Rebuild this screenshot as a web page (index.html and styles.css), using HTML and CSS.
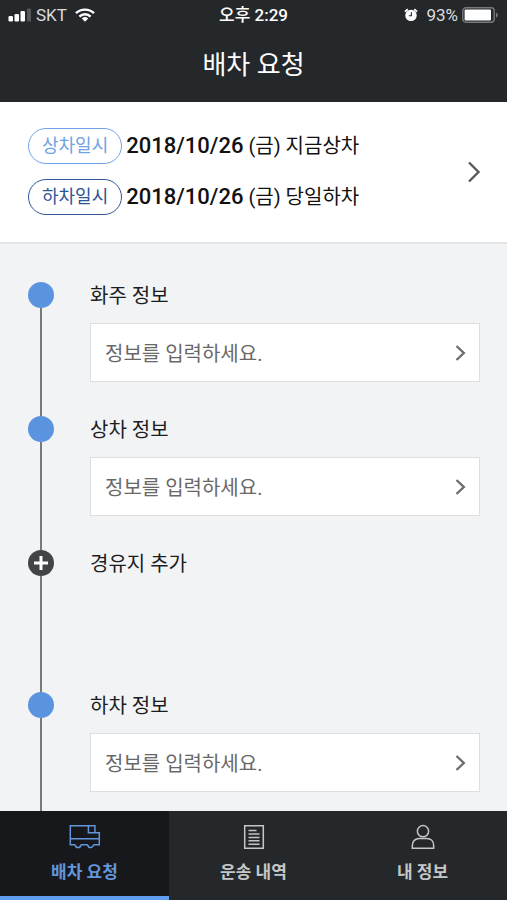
FILE: index.html
```html
<!DOCTYPE html>
<html lang="ko">
<head>
<meta charset="utf-8">
<meta name="viewport" content="width=device-width, initial-scale=1">
<title>배차 요청</title>
<link rel="stylesheet" href="styles.css">
</head>
<body>
<header class="header">
  <div class="status">
    <div class="status-side">
      <svg class="signal" width="24" height="14" viewBox="0 0 24 14" aria-hidden="true">
        <rect x="0.500" y="8" width="4.500" height="5.500" rx="1.200"/>
        <rect x="6.500" y="6" width="4.500" height="7.500" rx="1.200"/>
        <rect x="12.500" y="3" width="4.500" height="10.500" rx="1.200"/>
        <rect class="dim" x="19" y="0.500" width="4" height="13" rx="1.200"/>
      </svg>
      <span class="carrier">SKT</span>
      <svg width="20" height="14" viewBox="0 0 20 14" aria-hidden="true">
        <g fill="none" stroke="#fff" stroke-width="2.4">
          <path d="M1 5.2a13 13 0 0 1 18 0"/>
          <path d="M4.4 8.6a8 8 0 0 1 11.2 0"/>
        </g>
        <path fill="#fff" d="M6.8 10.5a4.8 4.8 0 0 1 6.4 0L10 13.8z"/>
      </svg>
    </div>
    <span class="clock">오후 2:29</span>
    <div class="status-side status-end">
      <svg width="14" height="14" viewBox="0 0 14 14" aria-hidden="true">
        <circle cx="7" cy="7.4" r="5.700" fill="#fff"/>
        <path d="M.9 3.600 3.800 1.200M13.100 3.600l-2.900-2.400" stroke="#fff" stroke-width="1.800" fill="none"/>
        <path d="M7.4 4.2v3.6H4.8" stroke="#25282b" stroke-width="1.100" fill="none"/>
      </svg>
      <span class="percent">93%</span>
      <svg width="37" height="16" viewBox="0 0 37 16" aria-hidden="true">
        <rect x=".8" y=".8" width="31.4" height="14.4" rx="3" fill="none" stroke="#77797b" stroke-width="1.4"/>
        <rect x="2.6" y="2.6" width="26.4" height="10.8" rx="1" fill="#fff"/>
        <path d="M34 5.4c2.400 .8 2.400 4.400 0 5.200z" fill="#77797b"/>
      </svg>
    </div>
  </div>
  <h1 class="title">배차 요청</h1>
</header>

<button class="schedule" type="button">
  <span class="schedule-rows">
    <span class="schedule-row"><span class="chip">상차일시</span><span class="when"><span class="date">2018/10/26</span> (금) 지금상차</span></span>
    <span class="schedule-row"><span class="chip chip-dark">하차일시</span><span class="when"><span class="date">2018/10/26</span> (금) 당일하차</span></span>
  </span>
  <svg width="14" height="22" viewBox="0 0 14 22" fill="none" stroke="#58595a" stroke-width="2.4" aria-hidden="true"><path d="M2 1.500 11.500 11 2 20.500"/></svg>
</button>

<main class="content">
  <ol class="steps">
    <li class="step">
      <span class="rail"><span class="dot"></span></span>
      <div class="step-body">
        <h2 class="label" id="shipper">화주 정보</h2>
        <button class="field" type="button" aria-describedby="shipper">정보를 입력하세요.
          <svg width="11" height="18" viewBox="0 0 11 18" fill="none" stroke="#6c6d6e" stroke-width="2.400" aria-hidden="true"><path d="M1.500 2 8.800 9l-7.300 7"/></svg>
        </button>
      </div>
    </li>
    <li class="step">
      <span class="rail"><span class="dot"></span></span>
      <div class="step-body">
        <h2 class="label" id="loading">상차 정보</h2>
        <button class="field" type="button" aria-describedby="loading">정보를 입력하세요.
          <svg width="11" height="18" viewBox="0 0 11 18" fill="none" stroke="#6c6d6e" stroke-width="2.400" aria-hidden="true"><path d="M1.500 2 8.800 9l-7.300 7"/></svg>
        </button>
      </div>
    </li>
    <li class="step step-add">
      <span class="rail">
        <svg width="26" height="26" viewBox="0 0 26 26" aria-hidden="true"><circle cx="13" cy="13" r="13" fill="#414547"/><path d="M13 6v14M6 13h14" stroke="#fff" stroke-width="3"/></svg>
      </span>
      <div class="step-body">
        <button class="label add" type="button">경유지 추가</button>
      </div>
    </li>
    <li class="step">
      <span class="rail"><span class="dot"></span></span>
      <div class="step-body">
        <h2 class="label" id="unloading">하차 정보</h2>
        <button class="field" type="button" aria-describedby="unloading">정보를 입력하세요.
          <svg width="11" height="18" viewBox="0 0 11 18" fill="none" stroke="#6c6d6e" stroke-width="2.400" aria-hidden="true"><path d="M1.500 2 8.800 9l-7.300 7"/></svg>
        </button>
      </div>
    </li>
  </ol>
</main>

<nav class="tabs">
  <a class="tab tab-active" href="#request" aria-current="page">
    <svg width="32" height="26" viewBox="0 0 32 26" fill="none" stroke="currentColor" stroke-width="1.500" aria-hidden="true">
      <path d="M6.300 20.700H1.300V1.800h24.600v7h4.400v11.900h-6M11.800 20.700h7"/>
      <path d="M19.400 1.800v7h6.500M1.300 14.800h29"/>
      <path d="M6.300 20.700a2.750 2.900 0 0 0 5.500 0M18.800 20.700a2.750 2.900 0 0 0 5.500 0"/>
    </svg>
    <span>배차 요청</span>
  </a>
  <a class="tab" href="#history">
    <svg width="22" height="26" viewBox="0 0 22 26" fill="none" stroke="currentColor" stroke-width="1.500" aria-hidden="true">
      <path d="M1.700 1.700h18.600v22.600H1.700zM5.500 6.500h8M5.500 10h11M5.500 13.400h11M5.500 16.800h11M5.500 20.200h11"/>
    </svg>
    <span>운송 내역</span>
  </a>
  <a class="tab" href="#profile">
    <svg width="24" height="26" viewBox="0 0 24 26" fill="none" stroke="currentColor" stroke-width="1.500" aria-hidden="true">
      <circle cx="12" cy="7.200" r="5.600"/>
      <path d="M1.300 24.300v-2.600c0-4.600 3-7.200 7-7.200h7.400c4 0 7 2.600 7 7.200v2.600z"/>
    </svg>
    <span>내 정보</span>
  </a>
</nav>
</body>
</html>
```
FILE: styles.css
```css
* {
  box-sizing: border-box;
}

body {
  display: flex;
  flex-direction: column;
  height: 100vh;
  margin: 0;
  background: #f1f3f5;
  color: #1c1d1f;
  font-family: Roboto, "Noto Sans CJK KR", sans-serif;
}

button {
  margin: 0;
  border: 0;
  color: inherit;
  font: inherit;
  text-align: left;
  cursor: pointer;
}

svg {
  flex: none;
}

.header {
  flex: none;
  background: #25282b;
  color: #fff;
}

.status {
  display: flex;
  align-items: center;
  height: 30px;
  padding: 0 8px;
  font-size: 17px;
  line-height: 20px;
}

.status-side {
  display: flex;
  flex: 1;
  align-items: center;
  gap: 4px;
}

.status-end {
  justify-content: flex-end;
}

.signal {
  fill: #fff;
}

.signal .dim {
  fill: #55585b;
}

.carrier {
  margin-right: 4px;
  color: #dcdddd;
}

.clock {
  font-weight: 500;
}

.percent {
  margin-left: 4px;
  color: #dcdddd;
}

.title {
  margin: 0;
  padding: 17px 0 19px;
  font-size: 26px;
  font-weight: 400;
  line-height: 36px;
  text-align: center;
}

.schedule {
  display: flex;
  flex: none;
  align-items: center;
  justify-content: space-between;
  padding: 26px 26px 27px 28px;
  border-bottom: 2px solid #e3e5e7;
  background: #fff;
}

.schedule-rows {
  display: flex;
  flex-direction: column;
  gap: 15px;
}

.schedule-row {
  display: flex;
  align-items: center;
  gap: 4px;
}

.chip {
  padding: 0 13px;
  border: 1px solid #6fa3e6;
  border-radius: 18px;
  color: #6fa3e6;
  font-size: 18px;
  line-height: 34px;
}

.chip-dark {
  border-color: #2f5597;
  color: #2f5597;
}

.when {
  font-size: 20px;
  line-height: 30px;
  color: #111;
}

.date {
  font-size: 22px;
  font-weight: 500;
}

.content {
  flex: 1;
  min-height: 0;
  overflow-y: auto;
  scrollbar-width: none;
}

.steps {
  margin: 0;
  padding: 38px 27px 0 28px;
  list-style: none;
}

.step {
  display: flex;
  gap: 36px;
}

.rail {
  display: flex;
  flex: none;
  flex-direction: column;
  align-items: center;
  width: 26px;
}

.rail::after {
  flex: 1;
  width: 2px;
  background: #77797b;
  content: "";
}

.dot {
  width: 26px;
  height: 26px;
  border-radius: 50%;
  background: #5b94de;
}

.step-body {
  flex: 1;
  padding-bottom: 34px;
}

.step-add {
  min-height: 142px;
}

.label {
  margin: 0;
  font-size: 20px;
  font-weight: 400;
  line-height: 28px;
}

.add {
  padding: 0;
  background: none;
}

.field {
  display: flex;
  align-items: center;
  justify-content: space-between;
  width: 100%;
  height: 59px;
  margin-top: 13px;
  padding: 0 13px 0 14px;
  border: 1px solid #dcdee0;
  background: #fff;
  color: #686868;
  font-size: 20px;
}

.tabs {
  display: grid;
  flex: none;
  grid-template-columns: repeat(3, 1fr);
  background: #25282b;
}

.tab {
  display: flex;
  flex-direction: column;
  align-items: center;
  gap: 9px;
  padding: 13px 0 11px;
  border-bottom: 4px solid transparent;
  color: #c4c6c7;
  font-size: 17px;
  font-weight: 700;
  line-height: 26px;
  text-decoration: none;
}

.tab-active {
  border-bottom-color: #5f9eef;
  background: #17181b;
  color: #6395da;
}
```
